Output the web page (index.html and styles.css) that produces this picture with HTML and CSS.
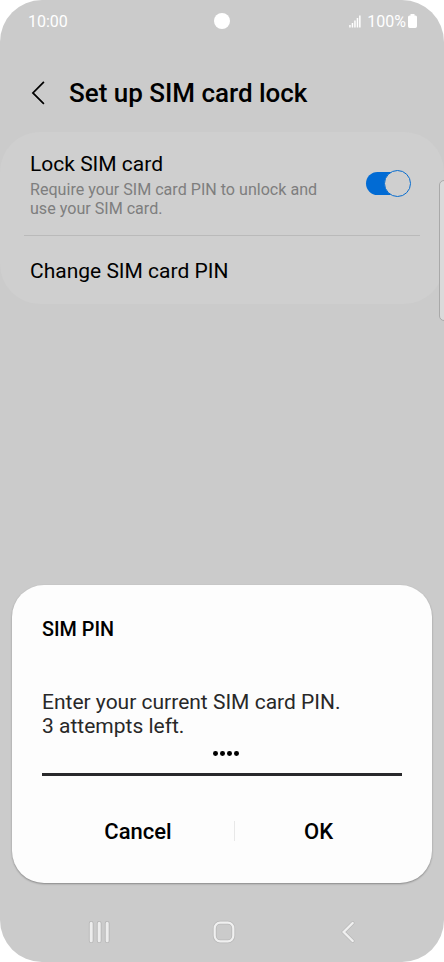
FILE: index.html
```html
<!DOCTYPE html>
<html lang="en">
<head>
<meta charset="utf-8">
<title>Set up SIM card lock</title>
<link rel="stylesheet" href="styles.css">
</head>
<body>
<div class="phone">
  <header class="status">
    <span class="clock">10:00</span>
    <span class="camera"></span>
    <div class="indicators">
      <svg class="signal" width="12" height="13" viewBox="0 0 12 13" fill="#fff"><path d="M.2 10h1.5v2.4H.2zM2.7 8h1.5v4.4H2.7zM5.2 5.5h1.5v6.9H5.2zM7.7 3h1.5v9.4H7.7zM10.1.6h1.5v11.8h-1.5z"/></svg>
      <span class="percent">100%</span>
      <svg class="battery" width="9" height="14" viewBox="0 0 9 14" fill="#fff"><path d="M2.5 0h4v1.5h1Q9 1.5 9 3v9.3Q9 14 7.3 14H1.7Q0 14 0 12.3V3Q0 1.5 1.5 1.5h1z"/></svg>
    </div>
  </header>
  <div class="titlebar">
    <svg class="back" width="14" height="24" viewBox="0 0 14 24" fill="none" stroke="#000" stroke-width="1.7"><path d="M12.9.9 1.9 11.9l11 11"/></svg>
    <h1>Set up SIM card lock</h1>
  </div>
  <section class="card">
    <div class="row lock">
      <div class="copy">
        <h2>Lock SIM card</h2>
        <p>Require your SIM card PIN to unlock and<br>use your SIM card.</p>
      </div>
      <div class="toggle"><span class="knob"></span></div>
    </div>
    <div class="row change"><h2>Change SIM card PIN</h2></div>
  </section>
  <div class="edge"></div>
  <section class="dialog">
    <h3>SIM PIN</h3>
    <p class="message">Enter your current SIM card PIN.<br>3 attempts left.</p>
    <div class="field"><i></i><i></i><i></i><i></i></div>
    <div class="actions"><div class="action">Cancel</div><div class="sep"></div><div class="action">OK</div></div>
  </section>
  <nav class="nav">
    <svg width="24" height="26" viewBox="0 0 24 26" fill="none" stroke-linecap="round"><path stroke="#b7b7b7" stroke-width="4.8" d="M4.2 4.3v17.4M12.2 4.3v17.4M20.2 4.3v17.4"/><path stroke="#ededed" stroke-width="3" d="M4.2 4.3v17.4M12.2 4.3v17.4M20.2 4.3v17.4"/></svg>
    <svg class="home" width="26" height="26" viewBox="0 0 26 26" fill="none"><rect x="3.7" y="3.7" width="18.6" height="18.6" rx="5.5" stroke="#b9b9b9" stroke-width="3.8"/><rect x="3.7" y="3.7" width="18.6" height="18.6" rx="5.5" stroke="#f0f0f0" stroke-width="2.2"/></svg>
    <svg width="16" height="26" viewBox="0 0 16 26" fill="none" stroke-linecap="round"><path d="m12.7 4-9 9 9 9" stroke="#b9b9b9" stroke-width="3.8"/><path d="m12.7 4-9 9 9 9" stroke="#f0f0f0" stroke-width="2.4"/></svg>
  </nav>
</div>
</body>
</html>
```
FILE: styles.css
```css
* { box-sizing: border-box; }
body { margin: 0; background: #fff; font-family: Roboto, sans-serif; color: #000; }
h1, h2, h3, p { margin: 0; }
svg { display: block; flex: none; }
.phone { position: relative; width: 444px; height: 962px; border-radius: 42px; background: #cbcbcb; overflow: hidden; display: flex; flex-direction: column; white-space: nowrap; }
.status { height: 42px; display: grid; grid-template-columns: 185.5px 16px 1fr; align-items: center; padding: 0 27px 0 28px; color: #fff; font-size: 16px; line-height: 20px; }
.clock, .percent { padding-top: 1px; }
.camera { width: 16px; height: 16px; border-radius: 50%; background: #fff; }
.indicators { display: flex; justify-content: flex-end; align-items: center; }
.signal { margin-right: 6px; }
.battery { margin-left: 2px; }
.titlebar { height: 90px; display: flex; align-items: center; padding: 12px 0 0 31px; }
.back { margin-right: 24px; }
h1 { font-size: 26px; font-weight: 500; line-height: 32px; letter-spacing: -0.02px; }
.card { height: 172px; background: #cfcfcf; border-radius: 40px; padding: 0 24px; }
.row { display: flex; align-items: center; padding: 0 6px; }
.lock { height: 104px; border-bottom: 1px solid #bababa; }
.copy { flex: 1; padding-top: 2px; }
h2 { font-size: 21px; font-weight: 400; line-height: 26px; }
.copy p { margin-top: 3px; color: #7e7e7e; font-size: 16.1px; line-height: 19px; }
.toggle { width: 44px; height: 23px; margin-right: 4px; background: #016bd4; border-radius: 12px; display: flex; justify-content: flex-end; align-items: center; }
.knob { flex: none; width: 27px; height: 27px; margin-right: -1px; border: 1px solid #086dcf; border-radius: 50%; background: #cfcfcf; }
.change { height: 68px; padding-top: 2px; }
.edge { position: absolute; left: 439px; top: 180px; width: 10px; height: 141px; border: 1px solid #a9a9a9; border-radius: 5px; background: #dadada; }
.dialog { margin: 281px 12.5px 0 12px; height: 298px; border-radius: 32px; background: #fdfdfd; box-shadow: 0 1px 2px #0005; padding: 31px 29.5px 0 30px; }
h3 { font-size: 19.8px; font-weight: 500; line-height: 28px; }
.message { margin-top: 46px; color: #282828; font-size: 21px; line-height: 24px; }
.field { height: 38px; display: flex; justify-content: center; gap: 2.2px; padding: 13px 0 0 8px; border-bottom: 3px solid #29292b; }
.field i { width: 4.8px; height: 4.8px; border-radius: 50%; background: #000; }
.actions { display: grid; grid-template-columns: 192px 1px 167px; height: 20px; margin-top: 45px; font-size: 22px; font-weight: 500; }
.action { height: 26px; margin-top: -2px; text-align: center; line-height: 26px; }
.sep { height: 20px; background: #e8e8e8; }
.nav { height: 79px; padding: 19px 88px 0 87px; display: flex; align-items: center; justify-content: space-between; }
.home { margin-right: 4px; }
```
